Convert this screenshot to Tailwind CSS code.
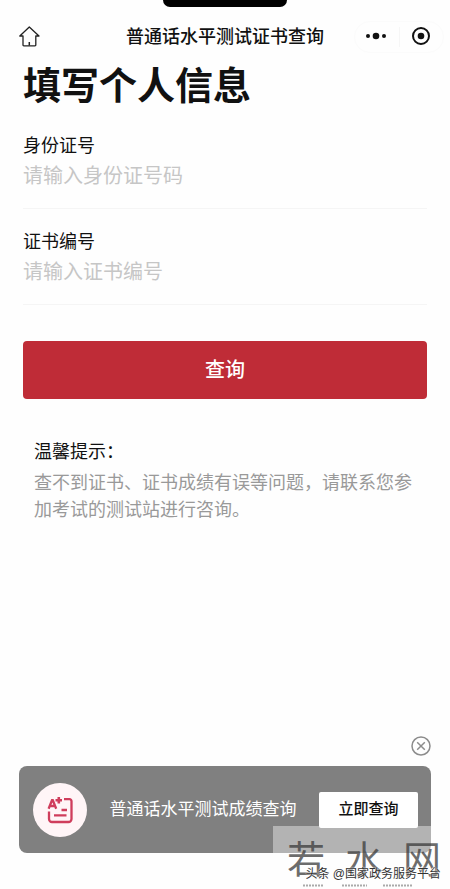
<!DOCTYPE html>
<html lang="zh-CN">
<head>
<meta charset="utf-8">
<meta name="viewport" content="width=device-width, initial-scale=1">
<title>普通话水平测试证书查询</title>
<script src="https://cdn.jsdelivr.net/npm/@tailwindcss/browser@4"></script>
</head>
<body class="relative flex min-h-screen flex-col overflow-x-hidden bg-[#fefefe] font-['Liberation_Sans','Noto_Sans_CJK_SC',sans-serif] text-[#111]">
  <div class="absolute top-0 left-1/2 h-[7px] w-[124px] -translate-x-1/2 rounded-b-xl bg-black"></div>

  <header class="grid grid-cols-[1fr_auto_1fr] items-center px-[18px] pt-[18px]">
    <a href="#" aria-label="首页" class="justify-self-start">
      <svg class="h-[22px] w-[22px]" viewBox="0 0 22 22" fill="none" stroke="#222" stroke-width="1.3" stroke-linejoin="round">
        <path d="M11.3 1 1.8 10H5v9a.8.8 0 0 0 .8.8H17a.8.8 0 0 0 .8-.8v-9H21z"/>
        <path d="M11.3 16v3.500" stroke-width="1.5"/>
      </svg>
    </a>
    <h1 class="text-lg/[38px] font-medium whitespace-nowrap">普通话水平测试证书查询</h1>
    <div class="-mr-3 flex h-8 w-[90px] items-center justify-self-end rounded-full border border-[#fbfbfb]">
      <button type="button" aria-label="更多" class="flex flex-1 justify-center">
        <svg class="h-5 w-6" viewBox="0 0 24 20" fill="#111"><circle cx="3" cy="9" r="2"/><circle cx="11" cy="9" r="3.3"/><circle cx="19" cy="9" r="2"/></svg>
      </button>
      <span class="h-5 w-px bg-[#f6f6f6]"></span>
      <button type="button" aria-label="关闭" class="flex flex-1 justify-center">
        <svg class="h-5 w-5" viewBox="0 0 20 20"><circle cx="10" cy="9" r="8" fill="none" stroke="#111" stroke-width="2"/><circle cx="10" cy="9" r="3.3" fill="#111"/></svg>
      </button>
    </div>
  </header>

  <main class="flex flex-1 flex-col px-[23px]">
    <h2 class="text-[38px]/[60px] font-bold">填写个人信息</h2>
    <form class="mt-4 flex flex-col">
      <div class="flex flex-col border-b border-[#f5f5f5] pb-4">
        <label for="idno" class="text-lg/[28px]">身份证号</label>
        <input id="idno" type="text" placeholder="请输入身份证号码" class="h-8 w-full bg-transparent text-xl/[32px] outline-none placeholder:text-[#c6c6c6]">
      </div>
      <div class="mt-[19px] flex flex-col border-b border-[#f5f5f5] pb-4">
        <label for="certno" class="text-lg/[28px]">证书编号</label>
        <input id="certno" type="text" placeholder="请输入证书编号" class="h-8 w-full bg-transparent text-xl/[32px] outline-none placeholder:text-[#c6c6c6]">
      </div>
      <button type="submit" class="mt-9 h-[58px] rounded bg-[#bf2c37] text-xl font-medium text-white">查询</button>
    </form>
    <section class="mt-[39px] pl-[11px]">
      <h3 class="text-lg/[28px]">温馨提示：</h3>
      <p class="mt-1 text-lg/[27px] text-[#999]">查不到证书、证书成绩有误等问题，请联系您参加考试的测试站进行咨询。</p>
    </section>
  </main>

  <footer class="flex flex-col px-[19px] pb-9">
    <button type="button" aria-label="关闭提示" class="mb-[10px] self-end">
      <svg class="h-5 w-5" viewBox="0 0 20 20" fill="none" stroke="#8c8c8c" stroke-width="1.5"><circle cx="10" cy="10" r="9"/><path d="m6.2 6.2 7.6 7.6m0-7.6-7.6 7.6"/></svg>
    </button>
    <div class="flex h-[87px] items-center justify-between rounded-lg bg-[#808080] pr-[13px] pl-[14px]">
      <span class="flex h-[54px] w-[54px] items-center justify-center rounded-full bg-[#fff5f7]">
        <svg class="h-7 w-7" viewBox="0 0 28 28" fill="none" stroke="#cf3d5c" stroke-width="2.3">
          <path d="M18 3.2H23.5a2 2 0 0 1 2 2V23a3 3 0 0 1-3 3H6a3 3 0 0 1-3-3v-7.5"/>
          <path d="M2.6 12.7 6 4.2h.8l3.4 8.5M4.2 10h4.8"/>
          <path d="M12.8 1v6.600M9.5 4.3H16" stroke-width="2.6"/>
          <path d="M15.5 14H21M8 19.3H20.500"/>
        </svg>
      </span>
      <p class="text-[17px] whitespace-nowrap text-white">普通话水平测试成绩查询</p>
      <button type="button" class="h-9 w-[99px] rounded-xs bg-white text-[15px] font-medium">立即查询</button>
    </div>
  </footer>

  <div class="pointer-events-none absolute right-0 bottom-0 h-[63px] w-[177px] overflow-hidden bg-[#fefefe]/40" aria-hidden="true">
    <p class="absolute top-[14px] left-[14px] flex gap-5 text-[38px]/[40px] whitespace-nowrap text-[#3c3c3c]/75"><span>若</span><span>水</span><span>网</span></p>
    <p class="absolute top-[38px] right-[9px] text-xs/[20px] whitespace-nowrap text-[#333] [text-shadow:0_0_2px_white,0_0_1px_white]">头条 @国家政务服务平台</p>
    <svg class="absolute bottom-[2px] left-[30px] h-[3px] w-[110px]" viewBox="0 0 110 3" stroke="#aaa" stroke-width="2" stroke-dasharray="2 1"><path d="M0 1.5h21M39 1.5h25M80 1.5h29"/></svg>
  </div>
</body>
</html>
